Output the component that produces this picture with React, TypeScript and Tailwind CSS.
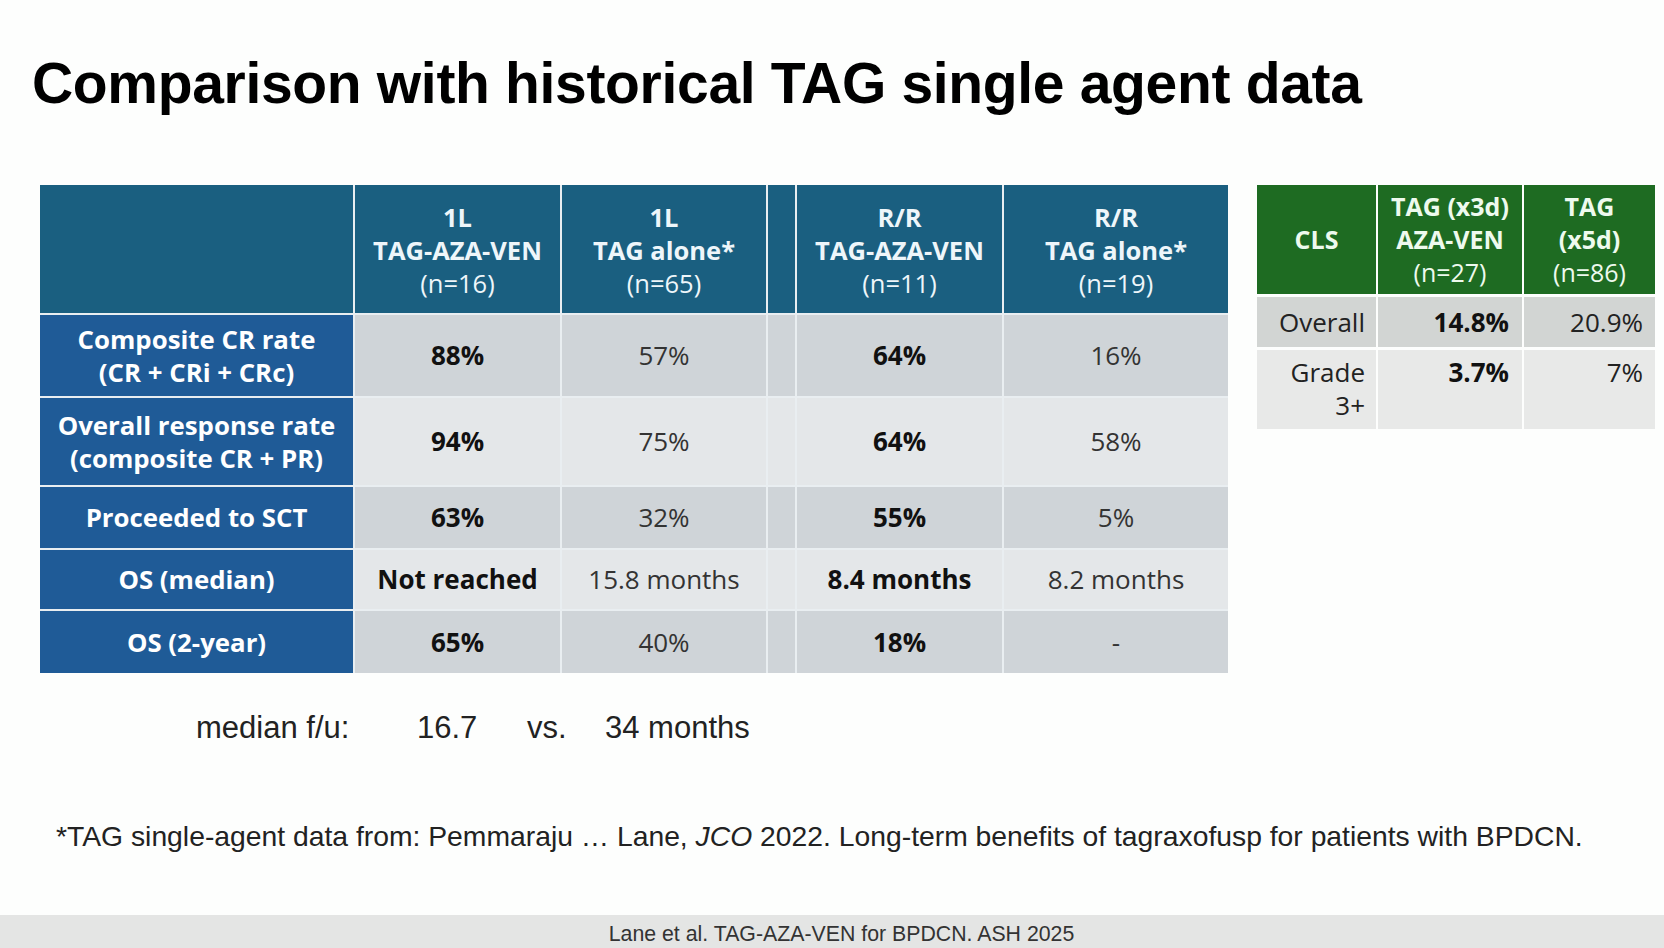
const rows = [
  { label: ['Composite CR rate', '(CR + CRi + CRc)'], vals: ['88%', '57%', '64%', '16%'], dark: true },
  { label: ['Overall response rate', '(composite CR + PR)'], vals: ['94%', '75%', '64%', '58%'], dark: false },
  { label: ['Proceeded to SCT'], vals: ['63%', '32%', '55%', '5%'], dark: true },
  { label: ['OS (median)'], vals: ['Not reached', '15.8 months', '8.4 months', '8.2 months'], dark: false },
  { label: ['OS (2-year)'], vals: ['65%', '40%', '18%', '-'], dark: true },
];

const heads = [
  ['1L', 'TAG-AZA-VEN', '(n=16)'],
  ['1L', 'TAG alone*', '(n=65)'],
  ['R/R', 'TAG-AZA-VEN', '(n=11)'],
  ['R/R', 'TAG alone*', '(n=19)'],
];

function HeadCell({ lines }: { lines: string[] }) {
  return (
    <div className="bg-[#1a5f80] flex flex-col items-center justify-center text-[#eef6fa] text-[25.5px] leading-[33px] pt-[2px]">
      <span className="font-bold">{lines[0]}</span>
      <span className="font-bold">{lines[1]}</span>
      <span>{lines[2]}</span>
    </div>
  );
}

function ValCell({ v, bold, dark }: { v: string; bold: boolean; dark: boolean }) {
  return (
    <div
      className={`${dark ? 'bg-[#cfd4d8]' : 'bg-[#e4e7e9]'} flex items-center justify-center text-[26px] ${
        bold ? 'font-bold text-[#111]' : 'text-[#333]'
      }`}
    >
      {v}
    </div>
  );
}

export default function App() {
  return (
    <div
      className="w-[1664px] h-[948px] bg-[#fdfefd] flex flex-col overflow-hidden"
      style={{ fontFamily: '"Open Sans", Lato, sans-serif' }}
    >
      {/* Title */}
      <h1
        className="pl-[32px] pt-[52px] h-[185px] text-[57px] leading-[62px] font-bold text-black tracking-[-0.32px]"
        style={{ fontFamily: '"Liberation Sans", Arial, sans-serif' }}
      >
        Comparison with historical TAG single agent data
      </h1>

      <div className="flex items-start">
        {/* Main table */}
        <div className="ml-[40px] grid grid-cols-[313px_205px_204px_27px_205px_224px] grid-rows-[128px_81px_87px_61px_59px_62px] gap-[2px] bg-[#e9eef1]">
          <div className="bg-[#1a5f80]" />
          <HeadCell lines={heads[0]} />
          <HeadCell lines={heads[1]} />
          <div className="bg-[#1a5f80]" />
          <HeadCell lines={heads[2]} />
          <HeadCell lines={heads[3]} />

          {rows.map((r) => (
            <>
              <div
                key={r.label[0]}
                className="bg-[#1f5b97] flex flex-col items-center justify-center text-white font-bold text-[25.8px] leading-[33px]"
              >
                {r.label.map((l) => (
                  <span key={l}>{l}</span>
                ))}
              </div>
              <ValCell v={r.vals[0]} bold dark={r.dark} />
              <ValCell v={r.vals[1]} bold={false} dark={r.dark} />
              <div className={r.dark ? 'bg-[#cfd4d8]' : 'bg-[#e4e7e9]'} />
              <ValCell v={r.vals[2]} bold dark={r.dark} />
              <ValCell v={r.vals[3]} bold={false} dark={r.dark} />
            </>
          ))}
        </div>

        {/* CLS table */}
        <div className="ml-[29px] grid grid-cols-[119px_144px_131px] grid-rows-[109px_50px_79px] gap-x-[2px] gap-y-[3px] text-[26px]">
          <div className="bg-[#1e6b22] flex items-center justify-center text-[#eefaee] font-bold text-[25px]">CLS</div>
          <div className="bg-[#1e6b22] flex flex-col items-center justify-center text-[#eefaee] text-[25px] leading-[33px]">
            <span className="font-bold">TAG (x3d)</span>
            <span className="font-bold">AZA-VEN</span>
            <span>(n=27)</span>
          </div>
          <div className="bg-[#1e6b22] flex flex-col items-center justify-center text-[#eefaee] text-[25px] leading-[33px]">
            <span className="font-bold">TAG</span>
            <span className="font-bold">(x5d)</span>
            <span>(n=86)</span>
          </div>

          <div className="bg-[#d2d5d3] flex items-center justify-end pr-[11px] text-[#222]">Overall</div>
          <div className="bg-[#d2d5d3] flex items-center justify-end pr-[13px] font-bold text-[#111]">14.8%</div>
          <div className="bg-[#d2d5d3] flex items-center justify-end pr-[12px] text-[#222]">20.9%</div>

          <div className="bg-[#e8e9e8] flex flex-col items-end pr-[11px] pt-[6px] leading-[33px] text-[#222]">
            <span>Grade</span>
            <span>3+</span>
          </div>
          <div className="bg-[#e8e9e8] flex justify-end pr-[13px] pt-[6px] leading-[33px] font-bold text-[#111]">3.7%</div>
          <div className="bg-[#e8e9e8] flex justify-end pr-[12px] pt-[6px] leading-[33px] text-[#222]">7%</div>
        </div>
      </div>

      {/* median follow-up */}
      <div
        className="flex items-center h-[34px] mt-[38px] text-[31px] text-[#222]"
        style={{ fontFamily: '"Liberation Sans", Arial, sans-serif' }}
      >
        <span className="ml-[196px] w-[221px]">median f/u:</span>
        <span className="w-[110px]">16.7</span>
        <span className="w-[78px]">vs.</span>
        <span>34 months</span>
      </div>

      {/* footnote */}
      <p
        className="mt-[74px] ml-[56px] text-[28.3px] leading-[34px] text-[#222] whitespace-nowrap"
        style={{ fontFamily: '"Liberation Sans", Arial, sans-serif' }}
      >
        *TAG single-agent data from: Pemmaraju … Lane, <i>JCO</i> 2022. Long-term benefits of tagraxofusp for patients
        with BPDCN.
      </p>

      {/* footer bar */}
      <div
        className="mt-auto h-[33px] bg-[#e4e5e4] flex items-center justify-center pt-[6px] pl-[19px] text-[21.3px] text-[#333]"
        style={{ fontFamily: '"Liberation Sans", Arial, sans-serif' }}
      >
        Lane et al. TAG-AZA-VEN for BPDCN. ASH 2025
      </div>
    </div>
  );
}
